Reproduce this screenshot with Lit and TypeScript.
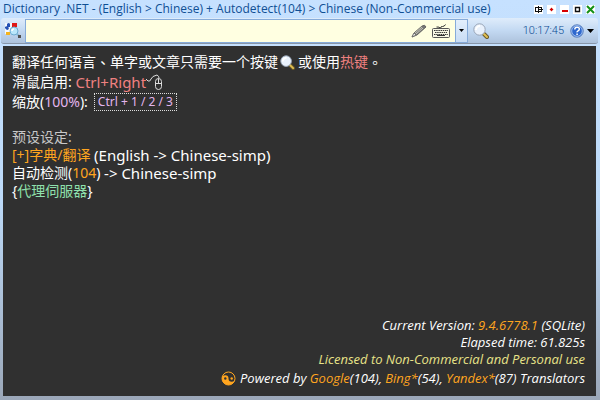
import { LitElement, html, css, svg } from "lit";
import { customElement, state } from "lit/decorators.js";

const lens = svg`
  <path d="M11 11l3 3" stroke="#6b5a28" stroke-width="4" stroke-linecap="round"/>
  <path d="M11 11l3 3" stroke="#e2c052" stroke-width="2" stroke-linecap="round"/>
  <circle cx="6.500" cy="6.500" r="5.700" fill="#e9f1fc" stroke="#98a4b6"/>
  <path d="M3 7a4 4 0 0 1 4-4" fill="none" stroke="#fff" stroke-width="2"/>`;

@customElement("app-root")
export class AppRoot extends LitElement {
  @state() private query = "";

  static styles = css`
    :host {
      display: flex;
      flex-direction: column;
      box-sizing: border-box;
      min-height: 100vh;
      padding: 0 4px 4px 3px;
      background: linear-gradient(#c6e1ff, #bddaf8 50%, #9ba7b8);
      font-family: "Noto Sans", "Noto Sans CJK SC", sans-serif;
      font-size: 13px;
      line-height: 18px;
      color: #fff;
    }
    button {
      display: flex;
      align-items: center;
      justify-content: center;
      flex: none;
      padding: 0;
      border: 0;
      background: none;
      font: inherit;
      color: inherit;
    }
    a { color: inherit; text-decoration: none; }
    svg { display: block; flex: none; }
    .title {
      display: flex;
      align-items: center;
      justify-content: space-between;
      height: 18px;
    }
    h1 {
      margin: 0;
      font-family: "Open Sans", sans-serif;
      font-size: 12px;
      line-height: 18px;
      font-weight: 400;
      white-space: nowrap;
      color: #0f4f94;
    }
    .controls { display: flex; gap: 4px; padding-right: 1px; }
    .controls button {
      width: 9px;
      height: 9px;
      background: #fff;
    }
    .toolbar {
      display: flex;
      align-items: center;
      height: 26px;
      margin: 0 -2px 2px;
      border-radius: 3px;
      box-sizing: border-box;
      border-bottom: 1px solid #8795a8;
      background: linear-gradient(#dfecfb, #c3d9f2 50%, #adc2dc);
    }
    .app { width: 24px; height: 22px; }
    .field {
      display: flex;
      flex: 1;
      min-width: 0;
      height: 24px;
      box-sizing: border-box;
      border: 1px solid #86abd9;
      background: #ffffe1;
    }
    input {
      flex: 1;
      min-width: 0;
      padding: 0 4px;
      border: 0;
      outline: 0;
      background: none;
      font: inherit;
      color: #222;
    }
    .tool { width: 22px; }
    .drop {
      width: 12px;
      margin-left: 3px;
      border-left: 1px solid #86abd9;
      background: linear-gradient(#e3effc, #c8dcf4);
    }
    .find { width: 26px; height: 22px; }
    .side {
      display: flex;
      align-items: center;
      justify-content: flex-end;
      flex: none;
      gap: 6px;
      width: 100px;
      padding-right: 4px;
    }
    time {
      font-family: Roboto, sans-serif;
      font-weight: 300;
      font-size: 11px;
      color: #0d4c93;
    }
    .help { gap: 3px; }
    main {
      display: flex;
      flex: 1;
      flex-direction: column;
      justify-content: space-between;
      padding: 6px 11px 9px 9px;
      background: #303030;
    }
    p { margin: 0; }
    .row { display: flex; align-items: center; white-space: nowrap; }
    .cjk { font-size: 14px; }
    .intro { line-height: 20px; }
    .intro p { height: 20px; }
    .setup { padding-top: 16px; }
    .setup p { height: 18px; }
    .latin { font-size: 15px; }
    .centred { font-family: "Noto Sans CJK TC", sans-serif; }
    .lens { margin: 0 3px 0 2px; }
    .red { color: #ef8080; }
    .plum { color: #e2b5ee; }
    .orange { color: #ffa51f; }
    .green { color: #8fe0ad; }
    .grey { color: #c8c8c8; }
    .khaki { color: #e8e388; }
    .keys {
      margin-left: 6px;
      padding: 0 3px;
      border: 1px dotted #ddd;
      font-size: 12px;
      line-height: 16px;
    }
    footer {
      font-family: "Open Sans", sans-serif;
      font-size: 13px;
      line-height: 17px;
      font-style: italic;
      text-align: right;
    }
    .powered {
      justify-content: flex-end;
      gap: 4px;
      padding-top: 2px;
    }
  `;

  render() {
    return html`
      <header class="title">
        <h1>Dictionary .NET - (English &gt; Chinese) + Autodetect(104) &gt; Chinese (Non-Commercial use)</h1>
        <div class="controls">
          <button aria-label="Dock"><svg width="9" height="9" shape-rendering="crispEdges"><path d="M1 2h3v1H2v3h2v1H1zM4 1h1v7H4zM5 4h4v1H5zM5 2h3v2H7V3H5zM5 6h2V5h1v2H5z" fill="#111"/></svg></button>
          <button aria-label="Pin"><svg width="9" height="9"><path d="M3 4h3v1H3zM4 3h1v3H4z" fill="#d00000" stroke="#d00000" stroke-width=".4"/></svg></button>
          <button aria-label="Minimize"><svg width="9" height="9"><path d="M2 5h6v2H2z" fill="#d80000"/></svg></button>
          <button aria-label="Maximize"><svg width="9" height="9"><path d="M2.500 2.500h4v4h-4z" fill="#fff" stroke="#111" stroke-width="1.400"/></svg></button>
          <button aria-label="Close"><svg width="9" height="9"><path d="M1 1l7 7M8 1L1 8" stroke="#159015" stroke-width="2"/></svg></button>
        </div>
      </header>

      <div class="toolbar">
        <button class="app" aria-label="Menu">
          <svg width="18" height="18" viewBox="0 0 18 18">
            <path d="M1 1h11v11H1z" fill="#f4f8fd"/>
            <path d="M3 2q2-2 3 0v3H3z" fill="#2350b4"/>
            <path d="M1 5q2-2 4 1l-1 2q-2 0-3-2z" fill="#2350b4"/>
            <path d="M8 1h5v4H8z" fill="#df1717"/>
            <path d="M2 10h4v3H2z" fill="#f5b31d"/>
            <path d="M13 12l2 2" stroke="#88b8d2" stroke-width="2"/>
            <path d="M14 13h3v3h-3z" fill="#505050"/>
            <circle cx="10" cy="9" r="4" fill="#b9e6fa" stroke="#6eacd2"/>
            <path d="M8 9q0-2 2-2" fill="none" stroke="#fff" stroke-width="1.500"/>
          </svg>
        </button>
        <div class="field">
          <input aria-label="Text to translate" .value=${this.query}
            @input=${(e: Event) => (this.query = (e.target as HTMLInputElement).value)} />
          <button class="tool" aria-label="Handwriting">
            <svg width="16" height="16" viewBox="0 0 16 16">
              <path d="M1 14l2-4 8-7q3-2 4 1l-9 8z" fill="#777" stroke="#555" stroke-width=".8"/>
              <path d="M4 10l7-6M5 11l7-6" stroke="#d8d8c8" stroke-width=".8"/>
              <path d="M1 14l2-4 2 2z" fill="#eee" stroke="#555" stroke-width=".6"/>
            </svg>
          </button>
          <button class="tool" aria-label="Keyboard">
            <svg width="20" height="16" viewBox="0 0 20 16">
              <path d="M9.500 5.500q-1-2-4-1.500M9.500 5q0-1.500 2-1.500t3-2" fill="none" stroke="#333"/>
              <rect x="1.500" y="5.500" width="17" height="9" rx="1" fill="#f7f7e4" stroke="#555"/>
              <path d="M3 7.500h14M4 9.500h12M3 11.500h14" stroke="#333" stroke-dasharray="1.500 .7"/>
              <path d="M6 12.500h8" stroke="#333"/>
            </svg>
          </button>
          <button class="drop" aria-label="History"><svg width="5" height="3"><path d="M0 0h5L2.500 3z" fill="#000"/></svg></button>
        </div>
        <button class="find" aria-label="Search"><svg width="16" height="16" viewBox="0 0 16 16">${lens}</svg></button>
        <div class="side">
          <time>10:17:45</time>
          <button class="help" aria-label="Help">
            <svg width="14" height="14" viewBox="0 0 14 14">
              <circle cx="7" cy="7" r="6.300" fill="#2e68ce" stroke="#6d8fc4"/>
              <circle cx="7" cy="7" r="5.300" fill="none" stroke="#b9d2f5" stroke-width=".8"/>
              <path d="M4.800 5.500q0-2.200 2.300-2.200t2.200 1.900q0 1-1.200 1.600t-1 1.500M7.100 9.500v1.500" fill="none" stroke="#fff" stroke-width="1.500"/>
            </svg>
            <svg width="7" height="4"><path d="M0 0h7L3.500 4z" fill="#000"/></svg>
          </button>
        </div>
      </div>

      <main>
        <section class="cjk">
          <div class="intro">
            <p class="row">翻译任何语言<span class="centred">、</span>单字或文章只需要一个按键<svg class="lens" width="15" height="15" viewBox="0 0 16 16">${lens}</svg>或使用<a class="red" href="#hotkey">热键</a><span class="centred">。</span></p>
            <p class="row">滑鼠启用:&nbsp;<a class="red latin" href="#mouse">Ctrl+Right</a>
              <svg width="17" height="17" viewBox="0 0 17 17" fill="none" stroke="#ddd">
                <path d="M0 5l2 2q2 1 3-2t6-4q2 1 2 3"/>
                <rect x="9.500" y="4.500" width="6" height="11" rx="3"/>
                <path d="M9.500 9.500h6M12.500 4.500v5"/>
              </svg>
            </p>
            <p class="row">缩放(<a class="plum" href="#zoom">100%</a>):<span class="keys plum">Ctrl + 1 / 2 / 3</span></p>
          </div>
          <div class="setup">
            <p class="row grey">预设设定:</p>
            <p class="row"><a class="orange" href="#dictionary">[+]字典/翻译</a>&nbsp;<span class="latin">(English -&gt; Chinese-simp)</span></p>
            <p class="row">自动检测(<a class="orange" href="#detect">104</a>)&nbsp;<span class="latin">-&gt; Chinese-simp</span></p>
            <p class="row">{<a class="green" href="#proxy">代理伺服器</a>}</p>
          </div>
        </section>
        <footer>
          <p>Current Version: <a class="orange" href="#version">9.4.6778.1</a> (SQLite)</p>
          <p>Elapsed time: 61.825s</p>
          <p class="khaki">Licensed to Non-Commercial and Personal use</p>
          <p class="row powered">
            <svg width="15" height="15" viewBox="0 0 15 15">
              <circle cx="7.500" cy="7.500" r="6.500" fill="#303030" stroke="#ffa51f"/>
              <path d="M1 7.500a3.250 3.250 0 0 1 6.500 0a3.250 3.250 0 0 0 6.500 0a6.500 6.500 0 0 1-13 0z" fill="#ffa51f"/>
              <circle cx="4.300" cy="7.500" r="1.200" fill="#303030"/>
              <circle cx="10.700" cy="7.500" r="1.200" fill="#ffa51f"/>
            </svg>
            <span>Powered by <a class="orange" href="#google">Google</a>(104), <a class="orange" href="#bing">Bing*</a>(54), <a class="orange" href="#yandex">Yandex*</a>(87) Translators</span>
          </p>
        </footer>
      </main>
    `;
  }
}
